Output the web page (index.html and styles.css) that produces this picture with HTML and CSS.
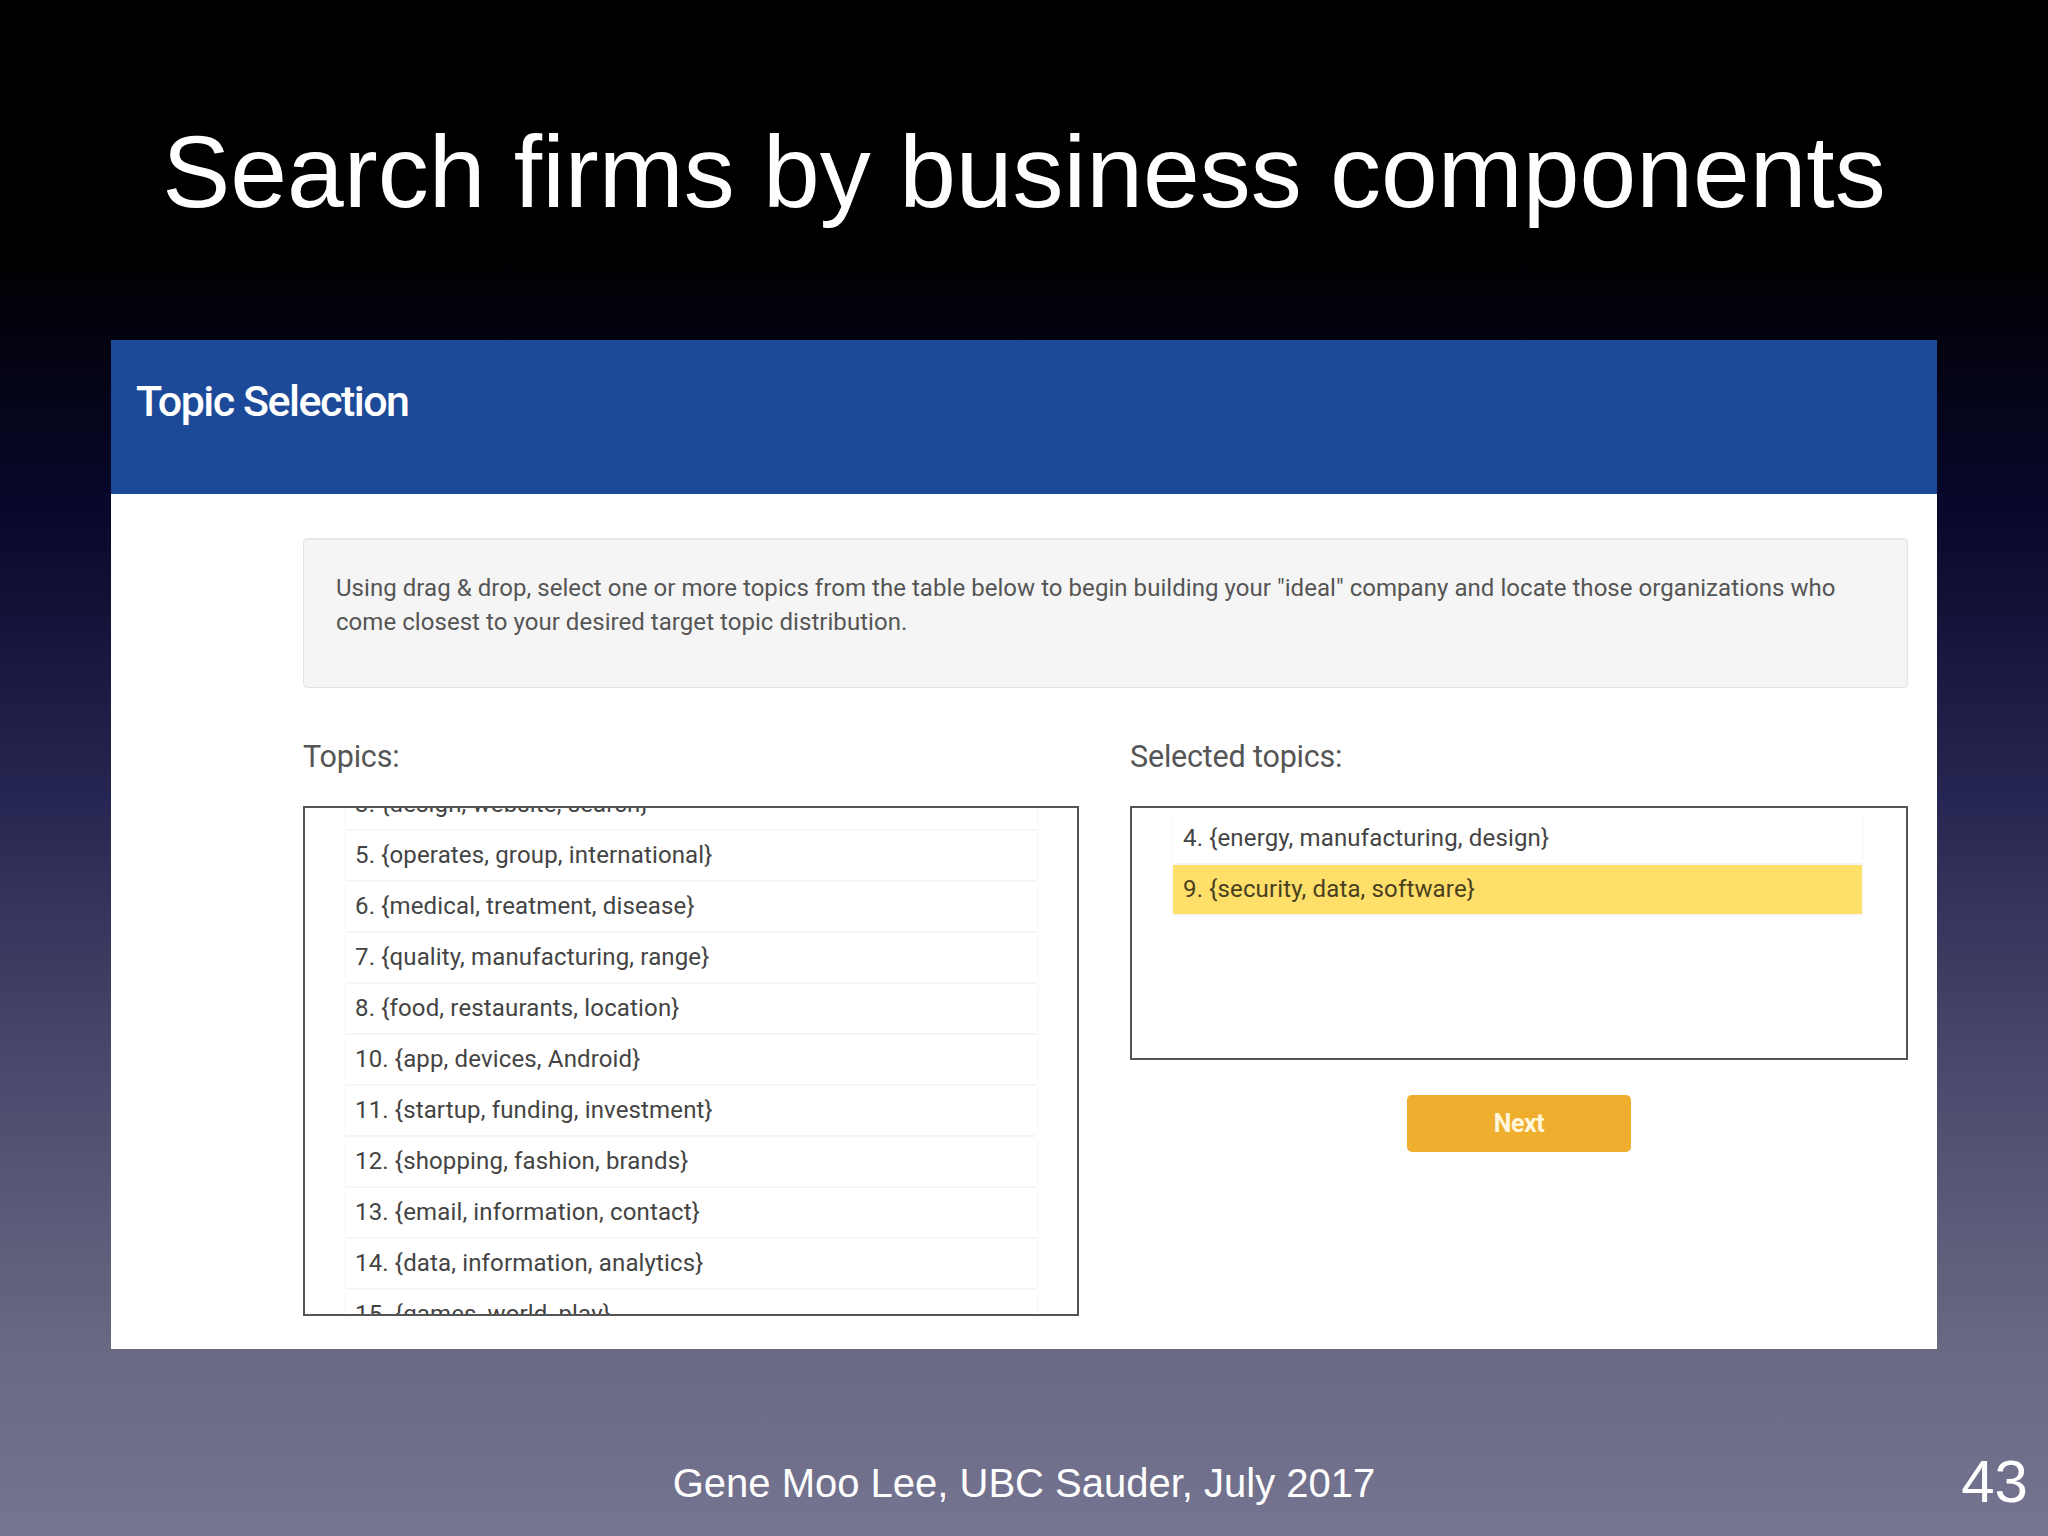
FILE: index.html
```html
<!DOCTYPE html>
<html lang="en">
<head>
<meta charset="utf-8">
<title>Search firms by business components</title>
<link rel="stylesheet" href="styles.css">
</head>
<body>
<div class="slide">
  <h1 class="title">Search firms by business components</h1>

  <div class="panel">
    <div class="panel-header">
      <h2 class="panel-title">Topic Selection</h2>
    </div>
    <div class="panel-body">
      <div class="info">
        <p>Using drag &amp; drop, select one or more topics from the table below to begin building your "ideal" company and locate those organizations who come closest to your desired target topic distribution.</p>
      </div>

      <div class="columns">
        <div class="col">
          <div class="label">Topics:</div>
          <div class="box box-topics">
            <ul class="list list-scrolled">
              <li class="item">3. {design, website, search}</li>
              <li class="item">5. {operates, group, international}</li>
              <li class="item">6. {medical, treatment, disease}</li>
              <li class="item">7. {quality, manufacturing, range}</li>
              <li class="item">8. {food, restaurants, location}</li>
              <li class="item">10. {app, devices, Android}</li>
              <li class="item">11. {startup, funding, investment}</li>
              <li class="item">12. {shopping, fashion, brands}</li>
              <li class="item">13. {email, information, contact}</li>
              <li class="item">14. {data, information, analytics}</li>
              <li class="item">15. {games, world, play}</li>
              <li class="item">16. {music, video, content}</li>
            </ul>
          </div>
        </div>

        <div class="col">
          <div class="label">Selected topics:</div>
          <div class="box box-selected">
            <ul class="list">
              <li class="item">4. {energy, manufacturing, design}</li>
              <li class="item item-active">9. {security, data, software}</li>
            </ul>
          </div>
          <div class="actions">
            <button class="btn-next" type="button">Next</button>
          </div>
        </div>
      </div>
    </div>
  </div>

  <div class="footer">
    <div class="footer-spacer"></div>
    <div class="footer-text">Gene Moo Lee, UBC Sauder, July 2017</div>
    <div class="page-num">43</div>
  </div>
</div>
</body>
</html>
```

FILE: styles.css
```css
* {
  box-sizing: border-box;
}

html, body {
  margin: 0;
  padding: 0;
}

body {
  background: #000;
  font-family: "Liberation Sans", Arial, sans-serif;
}

.slide {
  width: 2048px;
  height: 1536px;
  overflow: hidden;
  display: flex;
  flex-direction: column;
  background: linear-gradient(to bottom,
    #000000 0%,
    #000000 16%,
    #08082c 33%,
    #262652 52%,
    #4b4a6d 70%,
    #6a6983 88%,
    #757491 100%);
}

.title {
  margin: 0;
  padding-top: 114px;
  font-family: "Liberation Sans", Arial, sans-serif;
  font-weight: normal;
  font-size: 102px;
  line-height: 117px;
  color: #ffffff;
  text-align: center;
}

.panel {
  margin-top: 109px;
  margin-left: 111px;
  width: 1826px;
  height: 1009px;
  background: #ffffff;
  font-family: Roboto, "Noto Sans", sans-serif;
}

.panel-header {
  height: 154px;
  background: #1c4a99;
  padding: 35px 0 0 25px;
}

.panel-title {
  margin: 0;
  font-family: Roboto, "Noto Sans", sans-serif;
  font-weight: 500;
  font-size: 43px;
  line-height: 52px;
  letter-spacing: -1.5px;
  color: #ffffff;
}

.panel-body {
  padding: 44px 29px 0 192px;
}

.info {
  height: 150px;
  padding: 32px 32px 0 32px;
  background: #f5f5f5;
  border: 1px solid #e3e3e3;
  border-radius: 4px;
  box-shadow: inset 0 1px 1px rgba(0, 0, 0, 0.04);
}

.info p {
  margin: 0;
  font-size: 24px;
  line-height: 34px;
  color: #555555;
  letter-spacing: 0.05px;
}

.columns {
  display: grid;
  grid-template-columns: 776px 778px;
  column-gap: 51px;
  margin-top: 51px;
}

.label {
  font-size: 30.5px;
  line-height: 36px;
  color: #555555;
  margin-bottom: 31px;
  letter-spacing: -0.2px;
}

.box {
  border: 2px solid #555555;
  overflow: hidden;
  background: #ffffff;
}

.box-topics {
  height: 510px;
  padding: 0 40px;
}

.box-selected {
  height: 254px;
  padding: 6px 44px 0 41px;
}

.list {
  list-style: none;
  margin: 0;
  padding: 0;
}

.list-scrolled {
  margin-top: -28px;
}

.item {
  height: 49px;
  margin-bottom: 2px;
  padding-left: 10px;
  line-height: 49px;
  font-size: 24px;
  letter-spacing: 0.15px;
  color: #444444;
  background: #ffffff;
  box-shadow: 0 1px 3px rgba(0, 0, 0, 0.07);
  white-space: nowrap;
}

.item-active {
  background: #fddf6a;
  color: #4a4020;
}

.actions {
  display: flex;
  justify-content: center;
  margin-top: 35px;
}

.btn-next {
  width: 224px;
  height: 57px;
  border: none;
  border-radius: 5px;
  background: #efae2d;
  color: #fff6dc;
  font-family: Roboto, "Noto Sans", sans-serif;
  font-weight: bold;
  font-size: 25px;
  letter-spacing: -0.5px;
  padding: 0;
}

.footer {
  display: grid;
  grid-template-columns: 1fr auto 1fr;
  align-items: start;
  color: #ffffff;
  font-family: "Liberation Sans", Arial, sans-serif;
}

.footer-text {
  padding-top: 110px;
  font-size: 40px;
  line-height: 48px;
}

.page-num {
  justify-self: end;
  padding-top: 98px;
  padding-right: 20px;
  font-size: 60px;
  line-height: 70px;
}
```
